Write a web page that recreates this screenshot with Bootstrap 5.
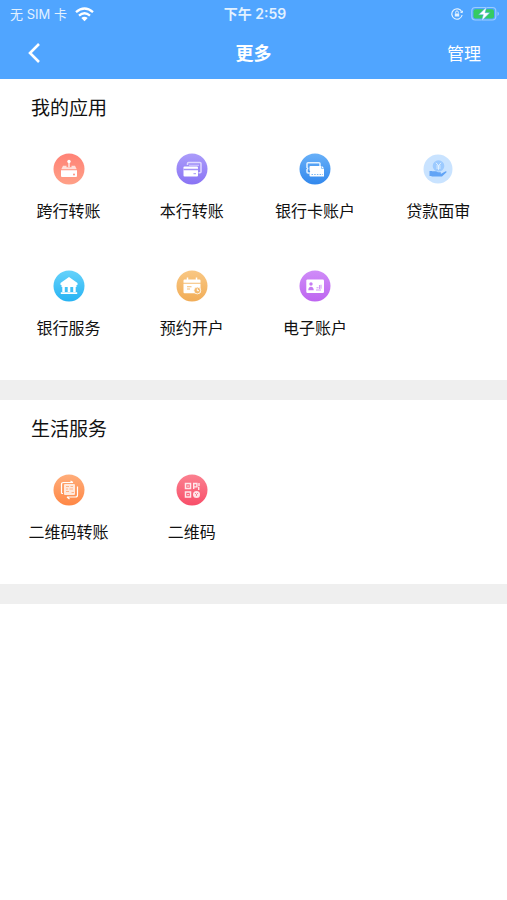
<!DOCTYPE html>
<html lang="zh-CN">
<head>
<meta charset="utf-8">
<meta name="viewport" content="width=device-width, initial-scale=1">
<title>更多</title>
<link rel="stylesheet" href="https://cdn.jsdelivr.net/npm/bootstrap@5.3.0/dist/css/bootstrap.min.css">
<style>
body{font-family:Inter,"Noto Sans CJK SC",sans-serif;color:#111;background:#fff}
.top-area{background:#50a5ff;color:#fff}
.status-bar{height:28px;font-size:14px;line-height:28px;padding:0 7px 0 10px}
.status-side{color:#e2f1ff}
.carrier{font-size:13px}
.title-bar{height:51px;padding:0 26px}
.title-bar h1{font-size:18px;line-height:24px}
.title-bar a{font-size:17px;line-height:24px}
.back-btn{width:16px;height:24px}
.app-section{border-bottom:20px solid #efefef;padding:18px 7px 8px}
.app-section h2{font-size:19px;line-height:24px;padding-left:24px;margin:0 0 17px;font-weight:400}
.app-tile{height:117px;padding-top:15px;color:#111;font-size:16px;line-height:24px}
.app-tile svg{width:32px;height:32px;margin-bottom:14px}
</style>
<script src="https://cdn.jsdelivr.net/npm/bootstrap@5.3.0/dist/js/bootstrap.bundle.min.js"></script>
</head>
<body>
<header class="top-area">
  <div class="status-bar row g-0">
    <div class="col d-flex align-items-center gap-2 status-side carrier">
      <span>无 SIM 卡</span>
      <svg width="19" height="15" viewBox="0 0 19 15" fill="none" stroke="#fff" stroke-width="2.4" aria-hidden="true"><path d="M1 5.200Q9.500-2 18 5.200M4 8.600Q9.500 4 15 8.600"/><path d="M6.300 11Q9.500 8.300 12.700 11L9.500 14.200Z" fill="#fff" stroke="none"/></svg>
    </div>
    <div class="col-auto fw-semibold status-side">下午 2:59</div>
    <div class="col d-flex align-items-center justify-content-end gap-2">
      <svg width="12" height="12" viewBox="0 0 12 12" fill="none" stroke="#e2f1ff" aria-hidden="true"><path d="M10.700 3.800A5.200 5.200 0 1 0 11.100 7" stroke-width="1.200"/><path d="M9.300 4.200l2 .5.400-2" stroke-width="1"/><path d="M3.800 5.500h4.400v3H3.800z" fill="#e2f1ff" stroke="none"/><path d="M4.700 5.500V4.200a1.300 1.300 0 0 1 2.600 0v1.300"/></svg>
      <svg width="29" height="16" viewBox="0 0 29 16" aria-hidden="true"><rect x=".8" y="1.500" width="24" height="12.500" rx="3.500" fill="none" stroke="#9bccff" stroke-width="1.200"/><rect x="2.500" y="3.200" width="20.500" height="9.200" rx="2" fill="#35cb62"/><path d="M26.500 5.500q3 2.200 0 4.500z" fill="#9bccff"/><path d="M15.800.8L7.600 8.700h4.700L10.500 15l8.300-8.300H14z" fill="#fff" stroke="#50a5ff" stroke-width=".5"/></svg>
    </div>
  </div>
  <nav class="title-bar row g-0 align-items-center" aria-label="页面导航">
    <div class="col"><button type="button" class="btn border-0 p-0 d-flex back-btn" aria-label="返回"><svg width="16" height="24" viewBox="0 0 16 24" fill="none" stroke="#fff" stroke-width="2.600" aria-hidden="true"><path d="M13 2L4 11l9 9"/></svg></button></div>
    <h1 class="col-auto m-0 fw-semibold">更多</h1>
    <div class="col text-end"><a href="#" class="text-white text-decoration-none">管理</a></div>
  </nav>
</header>
<main>
<section class="app-section" aria-labelledby="apps-title">
  <h2 id="apps-title">我的应用</h2>
  <div class="row g-0 row-cols-4">
    <a href="#" class="col app-tile d-flex flex-column align-items-center text-decoration-none">
      <svg viewBox="0 0 32 32" aria-hidden="true"><defs><linearGradient id="g1" x2="0" y2="1"><stop stop-color="#ff8276"/><stop offset="1" stop-color="#ffa087"/></linearGradient></defs><circle cx="16" cy="16" r="15.500" fill="url(#g1)"/><path d="M15.400 14V8.500h1.200V14z" fill="#fff"/><circle cx="16" cy="8.500" r="1.700" fill="#fff"/><path d="M10 12.800h3.500v1.500h5v-1.500H22l1.700 3.500H8.300z" fill="#ffe0db"/><path d="M8 17.300h16V23q0 1-1 1H9q-1 0-1-1z" fill="#fff"/><circle cx="21" cy="21.500" r="1" fill="#ff917f"/></svg>
      <span>跨行转账</span></a>
    <a href="#" class="col app-tile d-flex flex-column align-items-center text-decoration-none">
      <svg viewBox="0 0 32 32" aria-hidden="true"><defs><linearGradient id="g2" x2="0" y2="1"><stop stop-color="#ab9cfa"/><stop offset="1" stop-color="#8973f4"/></linearGradient></defs><circle cx="16" cy="16" r="15.500" fill="url(#g2)"/><path d="M11.500 12v-1.500q0-1 1-1H24q1 0 1 1v8.200q0 1-1 1h-1.500" fill="none" stroke="#e0d9ff" stroke-width="1.500"/><path d="M13 12.300h10" stroke="#cfc5ff" stroke-width="1.200"/><rect x="7.500" y="13.500" width="14.500" height="10" rx="1" fill="#fff"/><path d="M7.500 16.500H22" stroke="#a493f8" stroke-width="1.500"/><path d="M17.500 20.700H20" stroke="#a493f8"/></svg>
      <span>本行转账</span></a>
    <a href="#" class="col app-tile d-flex flex-column align-items-center text-decoration-none">
      <svg viewBox="0 0 32 32" aria-hidden="true"><defs><linearGradient id="g3" x2="0" y2="1"><stop stop-color="#68b0f8"/><stop offset="1" stop-color="#3288ed"/></linearGradient></defs><circle cx="16" cy="16" r="15.500" fill="url(#g3)"/><path d="M10.500 20H9q-1 0-1-1v-2.500q1.500-1 0-2V10.800q0-1 1-1h11q1 0 1 1V13" fill="none" stroke="#e4f2ff" stroke-width="1.500"/><path d="M11.500 13H23l2 2.200V23.500H11.500q-1 0-1-1v-2.800q1.500-1.200 0-2.500V14q0-1 1-1z" fill="#fff"/><path d="M22.500 13v2.500H25" fill="none" stroke="#7db9f5" stroke-width=".8"/><path d="M12.500 21.500H24" stroke="#7db9f5" stroke-width="1" stroke-dasharray="1.500 1.200"/></svg>
      <span>银行卡账户</span></a>
    <a href="#" class="col app-tile d-flex flex-column align-items-center text-decoration-none">
      <svg viewBox="0 0 32 32" aria-hidden="true"><circle cx="16" cy="16" r="14.500" fill="#c9e3ff"/><circle cx="16.500" cy="13" r="5.800" fill="#9ccaff"/><path d="M14 9.800l2.500 3 2.500-3M16.500 12.800v4M14.300 13h4.400M14.300 15h4.400" fill="none" stroke="#dff0ff" stroke-width="1"/><path d="M7.500 18h2.500v5H7.500zM9.500 18.200h4q1.300 0 2.400 1h2.600q1.300.8 0 1.500h.7l4-2.300q1.900-.2 1.300.9L20 23.500H9.500z" fill="#62a4f6"/></svg>
      <span>贷款面审</span></a>
    <a href="#" class="col app-tile d-flex flex-column align-items-center text-decoration-none">
      <svg viewBox="0 0 32 32" aria-hidden="true"><defs><linearGradient id="g4" x2="0" y2="1"><stop stop-color="#65d2fb"/><stop offset="1" stop-color="#27b3f3"/></linearGradient></defs><circle cx="16" cy="16" r="15.500" fill="url(#g4)"/><path d="M16 7l8.500 6v2h-17v-2zM9.300 16.500h2.500V22H9.300zm5.400 0h2.600V22h-2.600zm5.500 0h2.500V22h-2.500zM7.800 22.200h16.400V24H7.800zM8.500 15h15v2h-15z" fill="#fff"/></svg>
      <span>银行服务</span></a>
    <a href="#" class="col app-tile d-flex flex-column align-items-center text-decoration-none">
      <svg viewBox="0 0 32 32" aria-hidden="true"><defs><linearGradient id="g5" x2="0" y2="1"><stop stop-color="#f9c783"/><stop offset="1" stop-color="#f1ad58"/></linearGradient></defs><circle cx="16" cy="16" r="15.500" fill="url(#g5)"/><path d="M8.500 9.500h15q1 0 1 1v2.300h-17v-2.300q0-1 1-1zM7.500 13.800h17v8.400q0 1-1 1h-15q-1 0-1-1z" fill="#fff"/><path d="M11.500 7.500V11M20.500 7.500V11" stroke="#fff" stroke-width="1.500"/><path d="M11 16.700h4.500M11 19h3" stroke="#f4bd74" stroke-width="1.100"/><circle cx="21.300" cy="20.500" r="3.400" fill="#f4b96c" stroke="#fff" stroke-width=".8"/><path d="M21.300 18.500v2.200H23" fill="none" stroke="#fff"/></svg>
      <span>预约开户</span></a>
    <a href="#" class="col app-tile d-flex flex-column align-items-center text-decoration-none">
      <svg viewBox="0 0 32 32" aria-hidden="true"><defs><linearGradient id="g6" x2="0" y2="1"><stop stop-color="#cf8cf8"/><stop offset="1" stop-color="#be65f0"/></linearGradient></defs><circle cx="16" cy="16" r="15.500" fill="url(#g6)"/><rect x="7.300" y="9.500" width="17.700" height="13.500" rx="1.200" fill="#fff"/><circle cx="12" cy="14" r="1.700" fill="#c67bf3"/><path d="M9.300 20.300q0-3.500 2.700-3.500t2.700 3.500z" fill="#c67bf3"/><path d="M17 20h5M17.500 17.800h2M20.500 15v4M22 14.700v4" stroke="#d49bf6" stroke-width="1.100"/></svg>
      <span>电子账户</span></a>
  </div>
</section>
<section class="app-section" aria-labelledby="life-title">
  <h2 id="life-title">生活服务</h2>
  <div class="row g-0 row-cols-4">
    <a href="#" class="col app-tile d-flex flex-column align-items-center text-decoration-none">
      <svg viewBox="0 0 32 32" aria-hidden="true"><defs><linearGradient id="g7" x2="0" y2="1"><stop stop-color="#ffad7a"/><stop offset="1" stop-color="#ff8745"/></linearGradient></defs><circle cx="16" cy="16" r="15.500" fill="url(#g7)"/><rect x="11" y="10" width="11" height="11" rx="1" fill="#ffe9dc"/><path d="M13 12.500h3M17.500 12.500H20M13 15h2M16.500 15H20M13 17.500h3M18.500 18.500H21" fill="none" stroke="#ffad80" stroke-width=".9"/><path d="M8.500 19.500v-9q0-2 2-2H20M17.500 7l2.500 1.500M24.500 12.500V21q0 2-2 2H14M16.500 25L14 23M8.500 19.500H10" fill="none" stroke="#fff" stroke-width="1.200"/></svg>
      <span>二维码转账</span></a>
    <a href="#" class="col app-tile d-flex flex-column align-items-center text-decoration-none">
      <svg viewBox="0 0 32 32" aria-hidden="true"><defs><linearGradient id="g8" x2="0" y2="1"><stop stop-color="#fb8190"/><stop offset="1" stop-color="#f84e69"/></linearGradient></defs><circle cx="16" cy="16" r="15.500" fill="url(#g8)"/><path d="M9.500 9.500h5v5h-5zM9.500 18h5v5h-5z" fill="none" stroke="#ffe8eb" stroke-width="1.500"/><path d="M11.400 11.400h1.300v1.300h-1.300zM11.400 19.900h1.300v1.300h-1.300z" fill="#fff"/><path d="M17.700 15V9.500h3.200v3.400h-3M23 9v3M22.700 12.700V16" fill="none" stroke="#ffe8eb" stroke-width="1.400"/><circle cx="20.500" cy="20.500" r="3.500" fill="#ffe2e6"/><path d="M19 19l1.500 1.500L22 19M20.500 20.500V22" fill="none" stroke="#fa7286" stroke-width=".9"/></svg>
      <span>二维码</span></a>
  </div>
</section>
</main>
</body>
</html>
